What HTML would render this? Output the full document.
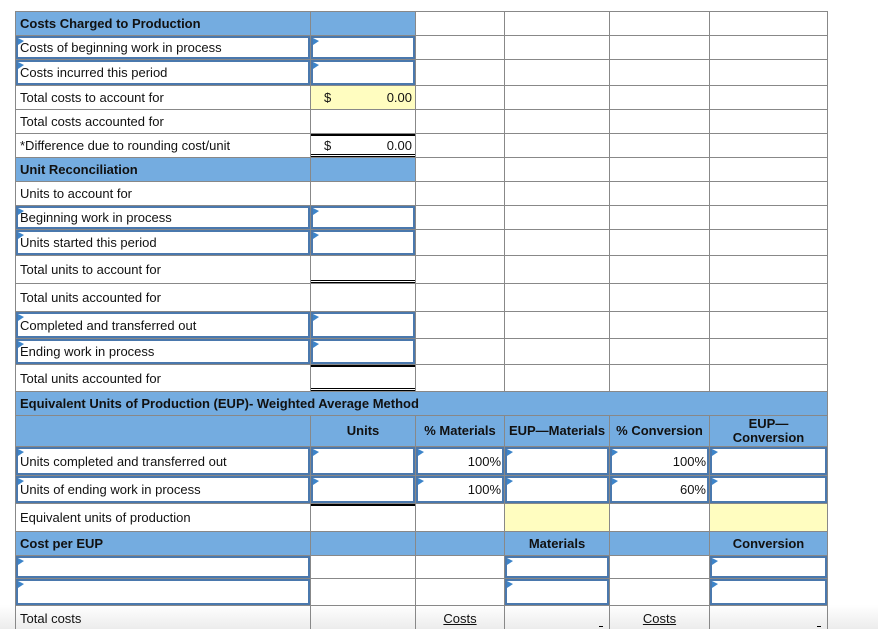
<!DOCTYPE html>
<html><head><meta charset="utf-8">
<style>
html,body{margin:0;padding:0;background:#fff;width:878px;height:629px;overflow:hidden;position:relative}
body{font-family:"Liberation Sans",Arial,sans-serif;font-size:13px;color:#111}
.c{position:absolute;box-sizing:border-box;border:1px solid #888;background:#fff;white-space:nowrap;overflow:hidden}
.b{background:#74ace0;font-weight:bold}
.y{background:#fffdc0}
.t{position:absolute;left:4px;top:0;bottom:0;display:flex;align-items:center}
.r{position:absolute;right:3px;top:0;bottom:0;display:flex;align-items:center}
.m{position:absolute;left:0;right:0;top:0;bottom:0;display:flex;align-items:center;justify-content:center;text-align:center;line-height:14px}
.in{position:absolute;left:0;top:0;right:0;bottom:0;border:2px solid #4a78ad}
.in:before{content:"";position:absolute;left:0;top:0;border-left:6px solid #3d84c9;border-bottom:4px solid transparent;border-top:3px solid transparent}
.tb{border-top:2px solid #000}
.db{border-bottom:3px double #000}
u{text-decoration:underline}
#fade{position:absolute;left:0;top:605px;width:878px;height:24px;background:linear-gradient(#fff,#ececec);}
</style></head><body>
<div id="fade"></div>
<div id="g"></div>
<script>
var L=[15,310,415,504,609,709,827];
var rows=[
[11,24,[{t:"Costs Charged to Production",cls:"b"},{cls:"b"},{},{},{},{}]],
[35,24,[{t:"Costs of beginning work in process",inp:1},{inp:1},{},{},{},{}]],
[59,26,[{t:"Costs incurred this period",inp:1},{inp:1},{},{},{},{}]],
[85,24,[{t:"Total costs to account for"},{cls:"y",dol:1},{},{},{},{}]],
[109,24,[{t:"Total costs accounted for"},{},{},{},{},{}]],
[133,24,[{t:"*Difference due to rounding cost/unit"},{dol:1,x:"tb db"},{},{},{},{}]],
[157,24,[{t:"Unit Reconciliation",cls:"b"},{cls:"b"},{},{},{},{}]],
[181,24,[{t:"Units to account for"},{},{},{},{},{}]],
[205,24,[{t:"Beginning work in process",inp:1},{inp:1},{},{},{},{}]],
[229,26,[{t:"Units started this period",inp:1},{inp:1},{},{},{},{}]],
[255,28,[{t:"Total units to account for"},{x:"db"},{},{},{},{}]],
[283,28,[{t:"Total units accounted for"},{},{},{},{},{}]],
[311,27,[{t:"Completed and transferred out",inp:1},{inp:1},{},{},{},{}]],
[338,26,[{t:"Ending work in process",inp:1},{inp:1},{},{},{},{}]],
[364,27,[{t:"Total units accounted for"},{x:"tb db"},{},{},{},{}]],
[415,31,[{cls:"b"},{cls:"b",m:"Units"},{cls:"b",m:"% Materials"},{cls:"b",m:"EUP—Materials"},{cls:"b",m:"% Conversion"},{cls:"b",m:"EUP—<br>Conversion"}]],
[446,29,[{t:"Units completed and transferred out",inp:1},{inp:1},{inp:1,r:"100%"},{inp:1},{inp:1,r:"100%"},{inp:1}]],
[475,28,[{t:"Units of ending work in process",inp:1},{inp:1},{inp:1,r:"100%"},{inp:1},{inp:1,r:"60%"},{inp:1}]],
[503,28,[{t:"Equivalent units of production"},{x:"tb"},{},{cls:"y"},{},{cls:"y"}]],
[531,24,[{t:"Cost per EUP",cls:"b"},{cls:"b"},{cls:"b"},{cls:"b",m:"Materials"},{cls:"b"},{cls:"b",m:"Conversion"}]],
[555,23,[{inp:1},{},{},{inp:1},{},{inp:1}]],
[578,27,[{inp:1},{},{},{inp:1},{},{inp:1}]],
[605,26,[{t:"Total costs",cls:"g"},{cls:"g"},{cls:"g",m:"<u>Costs</u>"},{cls:"g",dash:1},{cls:"g",m:"<u>Costs</u>"},{cls:"g",dash:1}]]
];
var h="";
rows.forEach(function(r){
 var y=r[0],hh=r[1];
 r[2].forEach(function(c,i){
  var x=L[i],w=L[i+1]-L[i]+1;
  var st="left:"+x+"px;top:"+y+"px;width:"+w+"px;height:"+(hh+1)+"px;";
  if(c.cls=="g")st+="background:transparent;";
  h+='<div class="c '+(c.cls||"")+'" style="'+st+'">';
  if(c.x){h+='<div style="position:absolute;left:0;right:0;top:0;bottom:0" class="'+c.x+'"></div>';}
  if(c.inp)h+='<div class="in"></div>';
  if(c.t)h+='<div class="t"'+(c.cls=="b"?' style="font-weight:bold"':'')+'>'+c.t+'</div>';
  if(c.m)h+='<div class="m">'+c.m+'</div>';
  if(c.r)h+='<div class="r">'+c.r+'</div>';
  if(c.dol)h+='<div class="t" style="left:13px">$</div><div class="r">0.00</div>';
  if(c.dash)h+='<div style="position:absolute;right:6px;bottom:4px;width:4px;height:1px;background:#000"></div>';
  h+='</div>';
 });
});
h+='<div class="c b" style="left:15px;top:391px;width:813px;height:25px"><div class="t">Equivalent Units of Production (EUP)- Weighted Average Method</div></div>';
document.getElementById("g").innerHTML=h;
</script>
</body></html>
